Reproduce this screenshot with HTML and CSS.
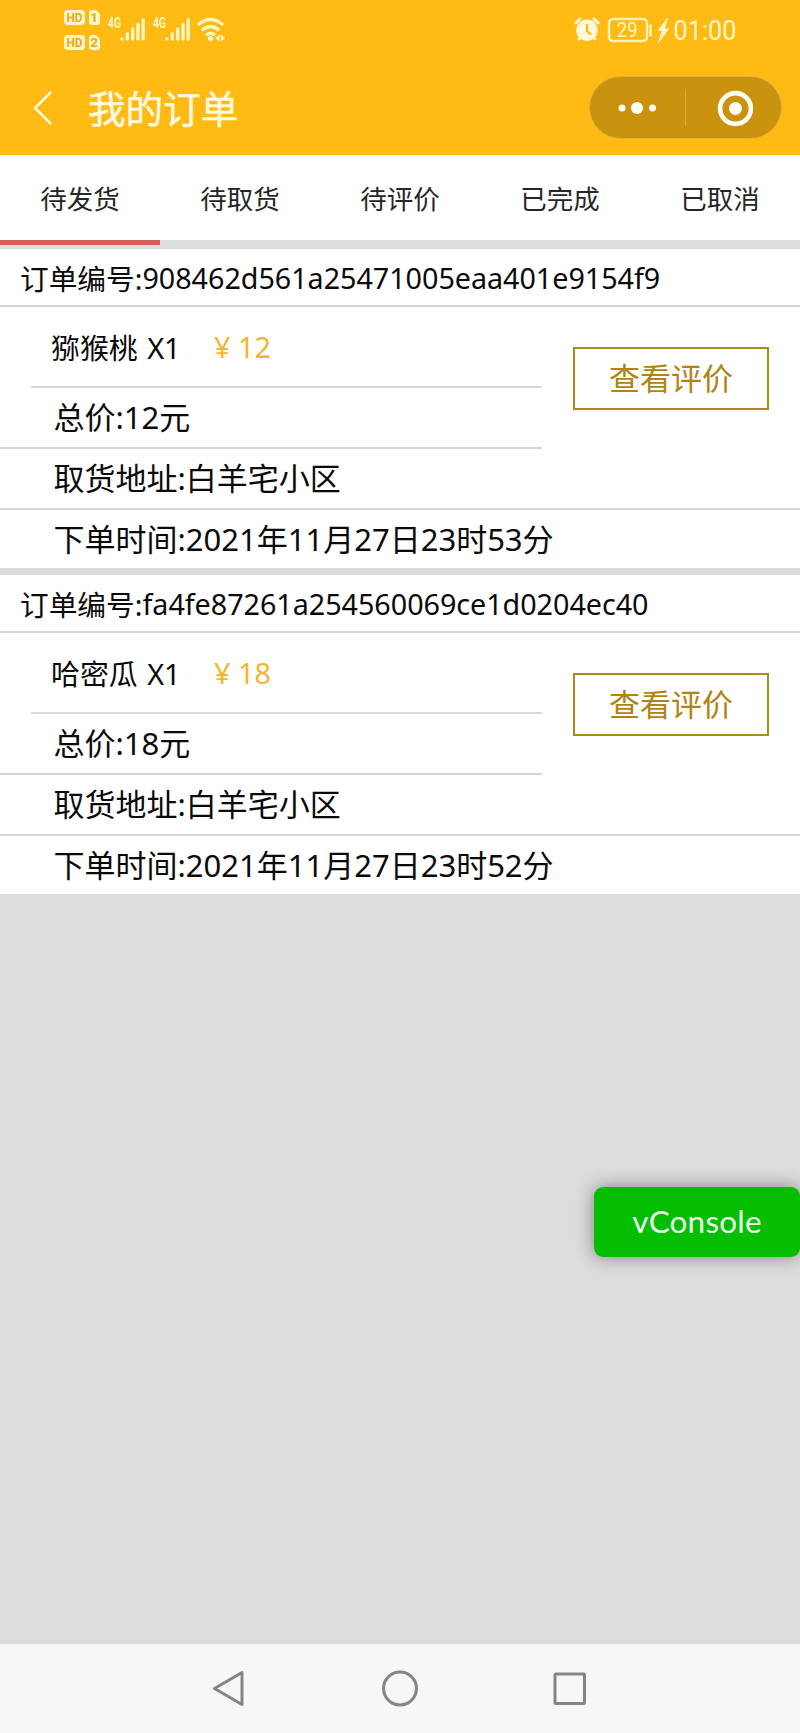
FILE: index.html
```html
<!DOCTYPE html>
<html lang="zh-CN">
<head>
<meta charset="utf-8">
<title>我的订单</title>
<link rel="stylesheet" href="styles.css">
</head>
<body>
<div class="screen">
  <header class="header">
    <div class="status">
      <svg class="status-left" width="170" height="60" viewBox="0 0 170 60">
        <g fill="#fff6c8">
          <rect x="4" y="10" width="21" height="15" rx="4"/>
          <path d="M32 10h4l4 4v8q0 3-3 3h-5q-3 0-3-3v-9q0-3 3-3z"/>
          <rect x="4" y="35" width="21" height="15" rx="4"/>
          <path d="M32 35h4l4 4v8q0 3-3 3h-5q-3 0-3-3v-9q0-3 3-3z"/>
        </g>
        <g class="badge-text">
          <text x="14.500" y="22.300" textLength="16" lengthAdjust="spacingAndGlyphs">HD</text><text x="34.200" y="22.300">1</text>
          <text x="14.500" y="47.300" textLength="16" lengthAdjust="spacingAndGlyphs">HD</text><text x="34.200" y="47.300">2</text>
        </g>
        <g class="net-text"><text x="48" y="28" textLength="13" lengthAdjust="spacingAndGlyphs">4G</text><text x="93" y="28" textLength="13" lengthAdjust="spacingAndGlyphs">4G</text></g>
        <g stroke="#fff6c8" stroke-width="3.300" stroke-linecap="round">
          <path d="M62 39v.2M67.300 34v5M72.700 29v10M78 24.500v14.500M83.200 20v19"/>
          <path d="M107 39v.2M112.300 34v5M117.700 29v10M123 24.500v14.500M128.200 20v19"/>
        </g>
        <g fill="none" stroke="#fff6c8" stroke-width="3.300" stroke-linecap="round">
          <path d="M139 24q11.500-9 23 0M143 29.500q7.500-6 15 0M147 34.500q3.500-2.500 7 0"/>
        </g>
        <circle cx="150.500" cy="38.500" r="2.600" fill="#fff6c8"/>
        <path d="M159.500 34.500v7l-4.500-3.500zM160.800 34.500v7l4.500-3.500z" fill="#fff6c8"/>
      </svg>
      <svg class="status-right" width="166" height="60" viewBox="0 0 166 60">
        <g stroke="#fff9dc" stroke-width="3" stroke-linecap="round"><path d="M2 23l4-4M20 19l4 4M5 39l3-3M21 39l-3-3"/></g>
        <circle cx="13" cy="30.300" r="10.700" fill="#fff9dc"/>
        <path d="M13 24v7l4 3.500" fill="none" stroke="#ffba13" stroke-width="2.300"/>
        <rect x="35" y="19" width="38" height="22" rx="4" fill="none" stroke="#fff2b8" stroke-width="2.500"/>
        <path d="M76.500 24.500v12" stroke="#fff2b8" stroke-width="2.500"/>
        <text class="battery" x="53.300" y="37" textLength="21" lengthAdjust="spacingAndGlyphs">29</text>
        <path d="M93.500 18L84.500 30.500h4L84.500 42.500 94.500 29h-4z" fill="#fff6c8" stroke="#fff6c8"/>
        <text class="clock" x="99.500" y="40.300" textLength="63" lengthAdjust="spacingAndGlyphs">01:00</text>
      </svg>
    </div>
    <div class="titlebar">
      <svg class="back" width="20" height="36" viewBox="0 0 20 36"><path d="M18 2L2 18l16 16" fill="none" stroke="#fff9dc" stroke-width="2.500"/></svg>
      <h1 class="title">我的订单</h1>
      <div class="capsule">
        <svg width="191" height="61" viewBox="-1 0 191 61">
          <g fill="#fffef5"><circle cx="31" cy="31" r="3.500"/><circle cx="46" cy="31" r="6"/><circle cx="61.500" cy="31" r="3.500"/></g>
          <path d="M94.500 12v37" stroke="#dca935"/>
          <circle cx="144.500" cy="31.500" r="15.400" fill="none" stroke="#fffef5" stroke-width="4.600"/>
          <circle cx="144.500" cy="31.500" r="6.500" fill="#fffef5"/>
        </svg>
      </div>
    </div>
  </header>

  <nav class="tabs">
    <div class="tab active">待发货</div>
    <div class="tab">待取货</div>
    <div class="tab">待评价</div>
    <div class="tab">已完成</div>
    <div class="tab">已取消</div>
  </nav>

  <main class="orders">
    <section class="order">
      <div class="order-no">订单编号:<span class="hash">908462d561a25471005eaa401e9154f9</span></div>
      <div class="order-body">
        <div class="goods">
          <div class="item"><span class="name">猕猴桃 X1</span><span class="price"><span class="yen">¥</span>12</span></div>
          <div class="total">总价:12元</div>
        </div>
        <div class="action"><button class="review">查看评价</button></div>
      </div>
      <div class="row">取货地址:白羊宅小区</div>
      <div class="row time">下单时间:2021年11月27日23时53分</div>
    </section>
    <section class="order">
      <div class="order-no">订单编号:<span class="hash">fa4fe87261a254560069ce1d0204ec40</span></div>
      <div class="order-body">
        <div class="goods">
          <div class="item"><span class="name">哈密瓜 X1</span><span class="price"><span class="yen">¥</span>18</span></div>
          <div class="total">总价:18元</div>
        </div>
        <div class="action"><button class="review">查看评价</button></div>
      </div>
      <div class="row">取货地址:白羊宅小区</div>
      <div class="row time">下单时间:2021年11月27日23时52分</div>
    </section>
  </main>

  <button class="vconsole">vConsole</button>

  <footer class="navbar">
    <svg width="800" height="89" viewBox="0 0 800 89" fill="none" stroke="#858585" stroke-width="3" stroke-linejoin="round">
      <path d="M214.500 44.500L242 28.500v32z"/>
      <circle cx="400" cy="44.500" r="16.500"/>
      <rect x="555" y="30" width="29.500" height="29.500" rx="1"/>
    </svg>
  </footer>
</div>
</body>
</html>
```
FILE: styles.css
```css
* { box-sizing: border-box; }
body { margin: 0; }
.screen {
  position: relative;
  display: flex;
  flex-direction: column;
  width: 800px;
  height: 1733px;
  overflow: hidden;
  background: #dcdcdc;
  color: #0a0a0a;
  font-family: "Noto Sans", "Noto Sans CJK SC", sans-serif;
}
svg { display: block; }

.header { height: 155px; background: #ffba13; }
.status { display: flex; justify-content: space-between; height: 60px; padding: 0 60px; }
.status-right, .status-left { flex: none; }
.badge-text { font: 700 13.500px Roboto, sans-serif; fill: #e9a820; text-anchor: middle; }
.net-text { font: 700 14px Roboto, sans-serif; fill: #fff6c8; }
.battery { font: 400 20px Roboto, sans-serif; fill: #fff6c8; text-anchor: middle; }
.clock { font: 400 27px Roboto, sans-serif; fill: #fff6c8; }

.titlebar { display: flex; align-items: center; height: 95px; padding: 0 18px 0 33px; }
.title {
  margin: 0 auto 0 35px;
  padding-bottom: 1px;
  font: 400 37.600px/60px "Noto Sans CJK SC", sans-serif;
  color: #fff9e0;
  -webkit-text-stroke: .5px #fff9e0;
}
.capsule {
  width: 193px;
  height: 63px;
  border: 1px solid #e2b03a;
  border-radius: 32px;
  background: #ca930f;
}

.tabs { display: flex; height: 94px; }
.tab {
  display: flex;
  align-items: center;
  justify-content: center;
  width: 160px;
  height: 85px;
  padding-bottom: 1px;
  background: #fff;
  color: #262626;
  font-size: 26.500px;
}
.tab.active { height: 90px; border-bottom: 5px solid #cb625b; }

.orders { display: flex; flex-direction: column; gap: 7px; white-space: nowrap; }
.order { background: #fff; height: 319px; }
.order-no {
  display: flex;
  align-items: center;
  height: 58px;
  padding: 0 0 0 20px;
  border-bottom: 2px solid #d5d5d5;
  font-size: 28.700px;
}
.hash { letter-spacing: -0.020px; }
.order-body { display: flex; height: 142px; }
.goods { width: 542px; }
.item {
  display: flex;
  align-items: center;
  height: 81px;
  margin-left: 31px;
  padding: 0 0 1px 20px;
  border-bottom: 2px solid #d8d8d8;
  font-size: 28.900px;
}
.name { width: 127px; word-spacing: 2px; }
.price { display: flex; margin-left: 36px; color: #f2b52c; }
.yen { width: 24px; }
.total, .row {
  display: flex;
  align-items: center;
  height: 61px;
  padding: 0 0 4px 53.500px;
  border-bottom: 2px solid #d5d5d5;
  font-size: 31px;
}
.time { height: 58px; border-bottom: 0; padding-bottom: 3px; }
.action { padding: 40px 0 0 31px; }
.review {
  width: 196px;
  height: 63px;
  padding: 0 0 5px;
  border: 2px solid #ad891c;
  background: #fff;
  color: #b08313;
  font: 400 31px "Noto Sans CJK SC", sans-serif;
}

.vconsole {
  position: absolute;
  right: 0;
  top: 1187px;
  width: 206px;
  height: 70px;
  padding: 0 0 2px;
  border: 0;
  border-radius: 9px;
  background: #04be02;
  box-shadow: 0 0 18px rgba(0, 0, 0, .4);
  color: #ecffec;
  font: 400 31.500px Lato, sans-serif;
  letter-spacing: .2px;
}
.navbar { height: 89px; margin-top: auto; background: #f7f7f7; }
```
